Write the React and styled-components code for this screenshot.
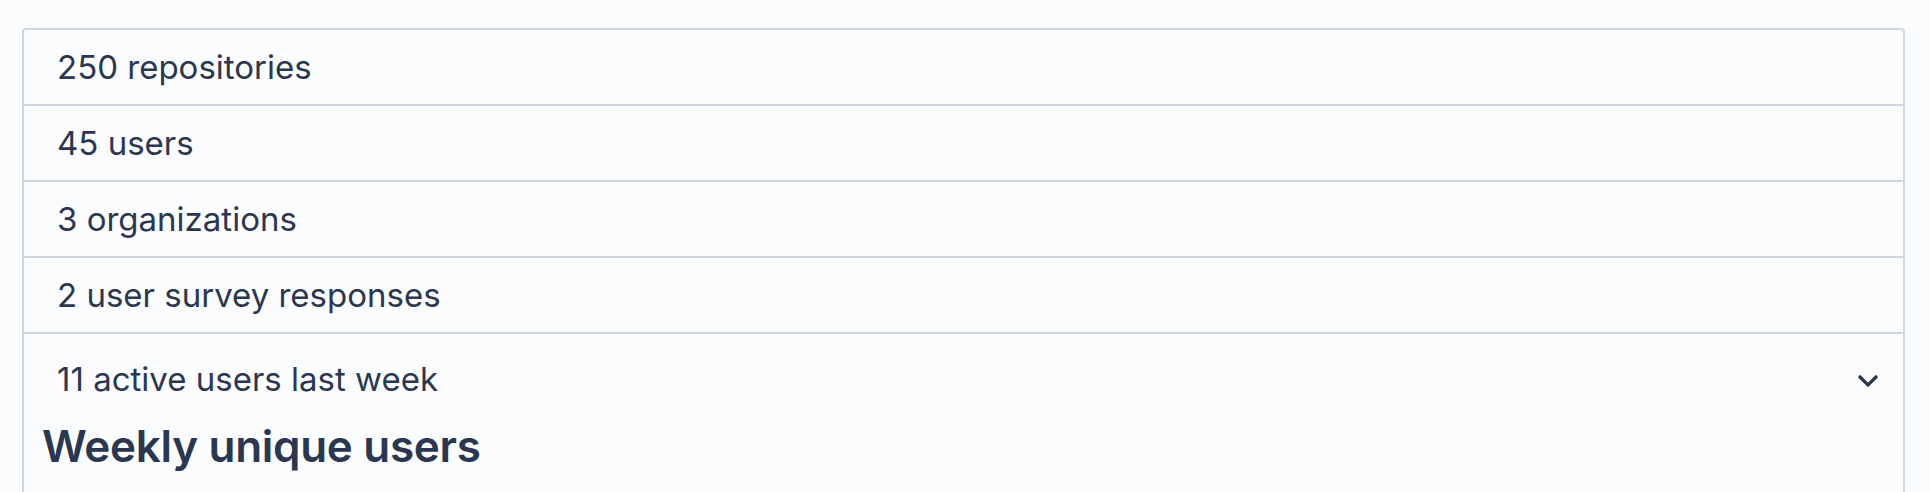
import React from 'react';
import styled, { createGlobalStyle } from 'styled-components';

const GlobalStyle = createGlobalStyle`
  html, body {
    margin: 0;
    padding: 0;
    background: #fbfcfe;
    color: #2b3750;
    font-family: Inter, "Noto Sans", sans-serif;
  }
`;

const Page = styled.div`
  padding: 28px 25px 0 22px;
`;

const Card = styled.div`
  border: 2px solid #cfd5e3;
  border-bottom: none;
  border-radius: 4px 4px 0 0;
  background: #fbfcfe;
`;

const Row = styled.div`
  padding: 14px 34px 13px 33px;
  font-size: 33px;
  line-height: 47px;
  border-bottom: 2px solid #cfd5e3;
`;

const Details = styled.div`
  padding: 0 0 200px;
`;

const Summary = styled.div`
  display: flex;
  align-items: center;
  justify-content: space-between;
  padding: 22px 24px 0 33px;
  font-size: 33px;
  line-height: 47px;
`;

const Chevron = styled.svg`
  width: 22px;
  height: 14px;
  margin-top: 2px;
`;

const Heading = styled.h2`
  margin: 16px 0 0 18px;
  font-size: 44px;
  line-height: 54px;
  font-weight: 600;
  letter-spacing: -0.3px;
`;

const stats = [
  '250 repositories',
  '45 users',
  '3 organizations',
  '2 user survey responses',
];

export default function App() {
  return (
    <>
      <GlobalStyle />
      <Page>
        <Card>
          {stats.map((s) => (
            <Row key={s}>{s}</Row>
          ))}
          <Details>
            <Summary>
              <span>11 active users last week</span>
              <Chevron viewBox="0 0 22 14">
                <path d="M2 2 L11 11 L20 2" fill="none" stroke="#2b3750" strokeWidth="3.2" />
              </Chevron>
            </Summary>
            <Heading>Weekly unique users</Heading>
          </Details>
        </Card>
      </Page>
    </>
  );
}
